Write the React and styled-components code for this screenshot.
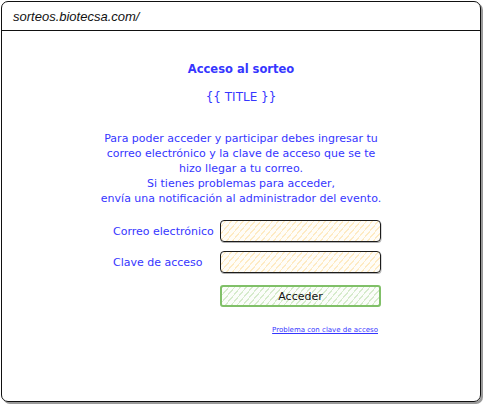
import React from "react";
import styled, { createGlobalStyle } from "styled-components";

const GlobalStyle = createGlobalStyle`
  html, body {
    margin: 0;
    padding: 0;
    background: #fff;
  }
  * {
    box-sizing: border-box;
  }
`;

const blue = "#3636ff";

const Page = styled.div`
  width: 484px;
  height: 405px;
  padding: 1px 3px 3px 1px;
  background: #fff;
`;

const Window = styled.div`
  width: 100%;
  height: 100%;
  border: 1.5px solid #111;
  border-radius: 7px;
  box-shadow: 2px 2px 0 #9a9a9a;
  display: flex;
  flex-direction: column;
  overflow: hidden;
`;

const AddressBar = styled.div`
  height: 29px;
  flex: none;
  border-bottom: 1.5px solid #111;
  display: flex;
  align-items: center;
  padding-left: 11px;
  font-family: "Liberation Sans", Arial, sans-serif;
  font-style: italic;
  font-size: 13px;
  color: #111;
`;

const Content = styled.div`
  flex: 1;
  display: flex;
  flex-direction: column;
  align-items: center;
  padding-top: 30px;
  font-family: "DejaVu Sans", "Liberation Sans", sans-serif;
  color: ${blue};
`;

const Title = styled.h1`
  margin: 0;
  font-size: 11.5px;
  font-weight: bold;
  line-height: 16px;
`;

const Template = styled.div`
  margin-top: 12px;
  font-size: 12px;
  line-height: 16px;
`;

const Intro = styled.p`
  margin: 26px 0 0;
  font-size: 11px;
  line-height: 15px;
  text-align: center;
`;

const Form = styled.form`
  margin-top: 14px;
  margin-left: 12px;
  display: grid;
  grid-template-columns: 107px 161px;
  row-gap: 9px;
  align-items: center;
`;

const Label = styled.label`
  font-size: 11px;
  white-space: nowrap;
`;

const hatch = (line, fill) => `repeating-linear-gradient(
  -50deg,
  ${line} 0 1.2px,
  ${fill} 1.2px 4.5px
)`;

const Field = styled.input`
  height: 22px;
  width: 161px;
  border: 1.8px solid #1c1c1c;
  border-radius: 4px;
  background: ${hatch("#feebc4", "#fffdf8")};
  box-shadow: 0.5px 1px 0 rgba(0, 0, 0, 0.3);
  outline: none;
`;

const Button = styled.button`
  grid-column: 2;
  margin-top: 3px;
  height: 22px;
  width: 161px;
  border: 2px solid #80c068;
  border-radius: 3px;
  background: ${hatch("#d6ebcc", "#fbfdfa")};
  font-family: "DejaVu Sans", sans-serif;
  font-size: 11px;
  color: #111;
  cursor: pointer;
`;

const HelpLink = styled.a`
  grid-column: 1 / 3;
  justify-self: end;
  margin-top: 10px;
  margin-right: 3px;
  font-size: 7px;
  color: ${blue};
  text-decoration: underline;
`;

export default function App() {
  return (
    <>
      <GlobalStyle />
      <Page>
        <Window>
          <AddressBar>sorteos.biotecsa.com/</AddressBar>
          <Content>
            <Title>Acceso al sorteo</Title>
            <Template>{"{{ TITLE }}"}</Template>
            <Intro>
              Para poder acceder y participar debes ingresar tu
              <br />
              correo electrónico y la clave de acceso que se te
              <br />
              hizo llegar a tu correo.
              <br />
              Si tienes problemas para acceder,
              <br />
              envía una notificación al administrador del evento.
            </Intro>
            <Form onSubmit={(e) => e.preventDefault()}>
              <Label htmlFor="email">Correo electrónico</Label>
              <Field id="email" type="email" />
              <Label htmlFor="clave">Clave de acceso</Label>
              <Field id="clave" type="password" />
              <Button type="submit">Acceder</Button>
              <HelpLink href="#">Problema con clave de acceso</HelpLink>
            </Form>
          </Content>
        </Window>
      </Page>
    </>
  );
}
